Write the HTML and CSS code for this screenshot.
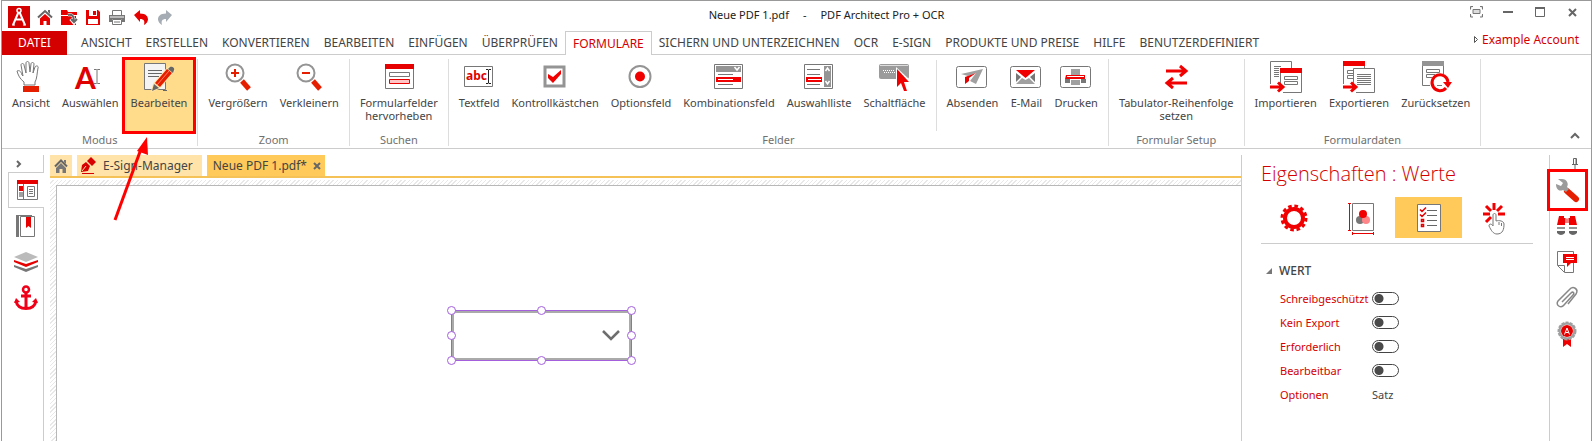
FILE: index.html
```html
<!DOCTYPE html>
<html lang="de">
  <head>
    <meta charset="utf-8">
    <title>Neue PDF 1.pdf - PDF Architect Pro + OCR</title>
    <link rel="stylesheet" href="styles.css">
  </head>
  <body>
    <div class="window">
      <header class="titlebar">
        <div class="quick">
          <svg class="logo" width="22" height="22" viewBox="0 0 22 22"><rect width="22" height="22" fill="#d40000"/><path d="M11 5L5 19M11 5l6 14M8 13.500h6" fill="none" stroke="#fff" stroke-width="2"/><circle cx="11" cy="4.500" r="2" fill="#d40000" stroke="#fff" stroke-width="1.500"/><path d="M4 19h3M15 19h3" stroke="#fff"/></svg>
          <button class="quick-btn" aria-label="Start"><svg width="18" height="18" viewBox="0 0 18 18"><path d="M2 9.500L9 3l7 6.500" fill="none" stroke="#666" stroke-width="2"/><path d="M12 2h2v4l-2-2z" fill="#666"/><path d="M4 10.500L9 6l5 4.500V17h-3.500v-4h-3v4H4z" fill="#e60000"/></svg></button>
          <button class="quick-btn" aria-label="Öffnen"><svg width="18" height="18" viewBox="0 0 18 18"><path d="M1 2h6l1 2h9v3H1zM1 8h9v9H1z" fill="#e60000"/><path d="M9 8h7v9H8" fill="#e60000"/><path d="M8 7c4-1 6 1 6 6M10.500 11l3.500 4 3-4" fill="none" stroke="#fff" stroke-width="3"/><path d="M8 7c4-1 6 1 6 6M11 11l3 3 3-3" fill="none" stroke="#666" stroke-width="2"/></svg></button>
          <button class="quick-btn" aria-label="Speichern"><svg width="18" height="18" viewBox="0 0 18 18"><path d="M2 2h12l2 2v13H2z" fill="#e60000"/><path d="M5 2h8v6H5zM4 11h10v5H4z" fill="#fff"/><path d="M9 3h3v4H9z" fill="#e60000"/></svg></button>
          <button class="quick-btn" aria-label="Drucken"><svg width="18" height="18" viewBox="0 0 18 18"><path d="M4.500 7V2.500h9V7" fill="#fff" stroke="#777"/><path d="M1 7h16v7h-3v-3H4v3H1z" fill="#777"/><path d="M2 9h14" stroke="#fff"/><path d="M4.500 11.500h9v5h-9zM6 14h6" fill="#fff" stroke="#777"/></svg></button>
          <button class="quick-btn" aria-label="Rückgängig"><svg width="18" height="18" viewBox="0 0 18 18"><path d="M2 7l6-5v3.500c6 0 8 3 8 6 0 2-2 4.500-4 5.500 1-4 0-6-4-6v3z" fill="#e60000"/></svg></button>
          <button class="quick-btn" aria-label="Wiederholen"><svg width="18" height="18" viewBox="0 0 18 18"><path d="M16 7l-6-5v3.500c-6 0-8 3-8 6 0 2 2 4.500 4 5.500-1-4 0-6 4-6v3z" fill="#a5acb3"/></svg></button>
        </div>
        <div class="title"><span>Neue PDF 1.pdf</span><span>-</span><span>PDF Architect Pro + OCR</span></div>
        <div class="controls">
          <button class="control" aria-label="Vollbild"><svg width="13" height="12" viewBox="0 0 13 12"><path d="M3 .5H.5v3M10 .5h2.500v3M.5 8v3H3M12.500 8v3H10M3 3.500h7v4H3z" fill="#ddd" stroke="#777"/></svg></button>
          <button class="control" aria-label="Minimieren"><svg width="13" height="12" viewBox="0 0 13 12"><path d="M1 6h10" stroke="#666" stroke-width="2"/></svg></button>
          <button class="control" aria-label="Maximieren"><svg width="13" height="12" viewBox="0 0 13 12"><path d="M1.500 1.500h9v9h-9z" fill="none" stroke="#666"/><path d="M1 2h10" stroke="#666" stroke-width="2"/></svg></button>
          <button class="control" aria-label="Schließen"><svg width="13" height="12" viewBox="0 0 13 12"><path d="M3 3l7 7M10 3l-7 7" stroke="#666" stroke-width="2"/></svg></button>
        </div>
      </header>

      <nav class="menu">
        <button class="menu-tab file">DATEI</button>
        <button class="menu-tab">ANSICHT</button>
        <button class="menu-tab">ERSTELLEN</button>
        <button class="menu-tab">KONVERTIEREN</button>
        <button class="menu-tab">BEARBEITEN</button>
        <button class="menu-tab">EINFÜGEN</button>
        <button class="menu-tab">ÜBERPRÜFEN</button>
        <button class="menu-tab active">FORMULARE</button>
        <button class="menu-tab">SICHERN UND UNTERZEICHNEN</button>
        <button class="menu-tab">OCR</button>
        <button class="menu-tab">E-SIGN</button>
        <button class="menu-tab">PRODUKTE UND PREISE</button>
        <button class="menu-tab">HILFE</button>
        <button class="menu-tab">BENUTZERDEFINIERT</button>
        <a class="account" href="#"><svg width="4" height="7" viewBox="0 0 4 7"><path d="M.5.5l3 3-3 3z" fill="none" stroke="#555"/></svg>Example Account</a>
      </nav>

      <section class="ribbon">
        <div class="group">
          <div class="tools">
            <button class="tool"><svg class="icon" viewBox="0 0 32 32"><path d="M9 24v-3C5 18 3 14 2 10c2-1 4 0 5 4l1 1L6 4c0-2 3-2 3 0l2 8V2c0-2 3-2 3 0l1 9 1-8c0-2 3-2 3 0l-1 9 2-6c1-2 4-1 3 1-1 5-1 11-3 14v3z" fill="#fff" stroke="#777"/><path d="M8 25h16v6H8z" fill="#e61e00"/></svg>Ansicht</button>
            <button class="tool"><svg class="icon" viewBox="0 0 32 32"><text class="glyph-a" x="1" y="28">A</text><path d="M20 8.500h2.500l.5.5.5-.5H26M23 9v13M20 22.500h2.500l.5-.5.5.5H26" fill="none" stroke="#777"/></svg>Auswählen</button>
            <button class="tool selected"><svg class="icon" viewBox="0 0 32 32"><path d="M1.500 2.500h21v26h-21z" fill="#f4f4f4" stroke="#777"/><path d="M5 9.500h14M5 12.500h14M5 15.500h11M20 29.500h4" stroke="#666"/><path d="M9 30l2-7L26 6l5 4-15 17z" fill="#ffe4a6" stroke="#ffe4a6" stroke-width="2"/><path d="M9 30l2-7 5 4z" fill="#666"/><path d="M12 22L24 8l5 4-12 14z" fill="#e61e00"/><path d="M14 24L26 10" stroke="#ff7b62"/><path d="M25 8l2-2c2-1 5 1 4 3l-1 3z" fill="#666"/></svg>Bearbeiten</button>
          </div>
          <div class="group-name">Modus</div>
        </div>
        <div class="group">
          <div class="tools">
            <button class="tool"><svg class="icon" viewBox="0 0 32 32"><circle cx="13" cy="12" r="8.500" fill="#fff" stroke="#949494" stroke-width="2"/><path d="M13 8v8M9 12h8" stroke="#e61e00" stroke-width="2"/><path d="M20 20l7 8" stroke="#e61e00" stroke-width="5"/></svg>Vergrößern</button>
            <button class="tool"><svg class="icon" viewBox="0 0 32 32"><circle cx="13" cy="12" r="8.500" fill="#fff" stroke="#949494" stroke-width="2"/><path d="M9 12h8" stroke="#e61e00" stroke-width="2"/><path d="M20 20l7 8" stroke="#e61e00" stroke-width="5"/></svg>Verkleinern</button>
          </div>
          <div class="group-name">Zoom</div>
        </div>
        <div class="group">
          <div class="tools">
            <button class="tool"><svg class="icon" viewBox="0 0 32 32"><path d="M2.500 3.500h28v24h-28z" fill="#fff" stroke="#777"/><path d="M2 3h29v5H2z" fill="#e60000"/><path d="M6.500 11.500h20v4h-20z" fill="#fff" stroke="#777"/><path d="M6.500 18.500h20v4h-20z" fill="#ffc4c4" stroke="#e60000"/></svg>Formularfelder<br>hervorheben</button>
          </div>
          <div class="group-name">Suchen</div>
        </div>
        <div class="group">
          <div class="tools">
            <button class="tool"><svg class="icon" viewBox="0 0 32 32"><path d="M1.500 5.500h28v20h-28z" fill="#fff" stroke="#777"/><text class="glyph-abc" x="3" y="19">abc</text><path d="M23 8.500h2l.5.5.5-.5h2M25.500 9v13M23 22.500h2l.5-.5.5.5h2" fill="none" stroke="#222"/></svg>Textfeld</button>
            <button class="tool"><svg class="icon" viewBox="0 0 32 32"><path d="M6 6h19v19H6z" fill="#fff" stroke="#949494" stroke-width="3"/><path d="M9 13l5 3 8-7v4l-8 9-5-5z" fill="#f00000"/></svg>Kontrollkästchen</button>
            <button class="tool"><svg class="icon" viewBox="0 0 32 32"><circle cx="15" cy="15.500" r="10.500" fill="#fff" stroke="#949494" stroke-width="2"/><circle cx="15" cy="15.500" r="5" fill="#f00000"/></svg>Optionsfeld</button>
            <button class="tool"><svg class="icon" viewBox="0 0 32 32"><path d="M1.500 3.500h28v24h-28z" fill="#fff" stroke="#777"/><path d="M3 5h25v6H3z" fill="#949494"/><path d="M21.500 6l2.500 3 2.500-3" fill="none" stroke="#fff" stroke-width="1.500"/><path d="M3 16h25v5H3z" fill="#f00000"/><path d="M5 13.500h15M5 23.500h15" stroke="#777"/><path d="M5 18.500h15" stroke="#fff"/></svg>Kombinationsfeld</button>
            <button class="tool"><svg class="icon" viewBox="0 0 32 32"><path d="M1.500 3.500h28v24h-28z" fill="#fff" stroke="#777"/><path d="M21 5h7v21h-7z" fill="#949494"/><path d="M22.500 10l2-3 2 3M22.500 20l2 3 2-3" fill="none" stroke="#fff" stroke-width="1.500"/><path d="M3 16h16v5H3z" fill="#f00000"/><path d="M4 8.500h13M4 13.500h13M4 23.500h13" stroke="#777"/><path d="M5 18.500h13" stroke="#fff"/></svg>Auswahlliste</button>
            <button class="tool"><svg class="icon" viewBox="0 0 32 32"><rect x="1" y="3" width="30" height="15" rx="2" fill="#9b9b9b"/><path d="M2 4.500h28" stroke="#ddd"/><path d="M5 9.500h11M6 11.500h11" stroke="#fff" stroke-dasharray="1 1"/><path d="M18 6v23l14-10z" fill="#fff"/><path d="M19 8v18l4-4 3 8h3l-3-9h5z" fill="#f00000"/></svg>Schaltfläche</button>
            <div class="divider"></div>
            <button class="tool"><svg class="icon" viewBox="0 0 32 32"><rect x=".5" y="5.500" width="30" height="21" rx="2" fill="#fff" stroke="#777"/><path d="M5 13l22-5-7 15-6-3 6-8-8 3z" fill="#a0a0a0"/><path d="M9 23v-7l11-4-7 5v3z" fill="#e60000"/></svg>Absenden</button>
            <button class="tool"><svg class="icon" viewBox="0 0 32 32"><rect x=".5" y="5.500" width="30" height="21" rx="2" fill="#fff" stroke="#777"/><path d="M6 9h19l-9.500 8z" fill="#f00000"/><path d="M6 12v9l5-5zM25 12v9l-5-5z" fill="#777"/><path d="M6 23l6-6 3.500 2 3.500-2 6 6z" fill="#a0a0a0"/></svg>E-Mail</button>
            <button class="tool"><svg class="icon" viewBox="0 0 32 32"><rect x=".5" y="5.500" width="30" height="21" rx="2" fill="#fff" stroke="#777"/><path d="M11 8h9v6h-9z" fill="#a0a0a0"/><path d="M6 14h19v4H5z" fill="#f00000"/><path d="M7 15.500h17" stroke="#fff"/><path d="M5 18h5v4H5zM21 18h5v4h-5z" fill="#777"/><path d="M11 19h9v5h-9z" fill="#a0a0a0"/></svg>Drucken</button>
          </div>
          <div class="group-name">Felder</div>
        </div>
        <div class="group">
          <div class="tools">
            <button class="tool"><svg class="icon" viewBox="0 0 32 32"><path d="M6 10h19M27 22H8M20 5l6 5-6 5M13 17l-6 5 6 5" fill="none" stroke="#f00000" stroke-width="3"/></svg>Tabulator-Reihenfolge<br>setzen</button>
          </div>
          <div class="group-name">Formular Setup</div>
        </div>
        <div class="group">
          <div class="tools">
            <button class="tool"><svg class="icon" viewBox="0 0 32 32"><path d="M.5 23V.5h21V7M4 5.500h7M4 7.500h5M4 9.500h5M4 11.500h5M4 13.500h5M4 15.500h5" fill="none" stroke="#777"/><path d="M10.500 23V7.500h21v24H13" fill="#fff" stroke="#777"/><path d="M10 7h22v5H10z" fill="#f00000"/><path d="M14.500 15.500h13v3h-13zM14.500 20.500h13v3h-13z" fill="#fff" stroke="#777"/><path d="M0 26h13M8 21.500l5 4.500-5 4.500" fill="none" stroke="#f00000" stroke-width="3"/></svg>Importieren</button>
            <button class="tool"><svg class="icon" viewBox="0 0 32 32"><path d="M.5 23V.5h21V7" fill="none" stroke="#777"/><path d="M0 0h22v5H0z" fill="#f00000"/><path d="M10 9.500H4.500v3H10M10 14.500H4.500v3H10" fill="none" stroke="#777"/><path d="M10.500 22V7.500h21v24H13" fill="#fff" stroke="#777"/><path d="M14 13.500h14M14 15.500h14M14 17.500h14M14 19.500h14M14 21.500h14M14 23.500h14" stroke="#777"/><path d="M0 26h13M8 21.500l5 4.500-5 4.500" fill="none" stroke="#f00000" stroke-width="3"/></svg>Exportieren</button>
            <button class="tool"><svg class="icon" viewBox="0 0 32 32"><path d="M10 24.500H2.500V.5h21V13" fill="none" stroke="#777"/><path d="M2 0h22v5H2z" fill="#949494"/><path d="M6.500 8.500h13v3h-13zM12 16.500H6.500v-3H15M17 24.500h5" fill="none" stroke="#777"/><path d="M26 27a8 8 0 1 1 2-6" fill="none" stroke="#f00000" stroke-width="3"/><path d="M23 21h9l-4 6z" fill="#f00000"/></svg>Zurücksetzen</button>
          </div>
          <div class="group-name">Formulardaten</div>
        </div>
        <button class="collapse" aria-label="Menüband reduzieren"><svg width="10" height="7" viewBox="0 0 10 7"><path d="M1 6l4-4 4 4" fill="none" stroke="#666" stroke-width="2"/></svg></button>
      </section>

      <main class="workspace">
        <aside class="side-left">
          <button class="side-toggle" aria-label="Seitenleiste öffnen"><svg width="6" height="8" viewBox="0 0 6 8"><path d="M1 1l3 3-3 3" fill="none" stroke="#666" stroke-width="2"/></svg></button>
          <button class="side-tab active" aria-label="Seiten"><svg width="24" height="24" viewBox="0 0 24 24"><path d="M2.500 3.500h20v18h-20zM8.500 4v18" fill="#fff" stroke="#777"/><path d="M2 2h21v4H2z" fill="#e60000"/><path d="M4 8h4v5H4z" fill="#e60000"/><path d="M4 14h4v5H4z" fill="#a0a0a0"/><path d="M12.500 8.500h7v10h-7zM14 11.500h4M14 13.500h4M14 15.500h4" fill="none" stroke="#777"/></svg></button>
          <button class="side-tab" aria-label="Lesezeichen"><svg width="24" height="24" viewBox="0 0 24 24"><path d="M2 1h3v22H2z" fill="#777"/><path d="M6.500 2.500h14v20h-14zM4 1.500h14" fill="#fff" stroke="#777"/><path d="M12 3h5v11l-2.500-2-2.500 2z" fill="#e60000"/></svg></button>
          <button class="side-tab" aria-label="Ebenen"><svg width="24" height="24" viewBox="0 0 24 24"><path d="M0 15l12 4 12-4v2l-12 5-12-5z" fill="#777"/><path d="M0 10l12 4 12-4v2l-12 5-12-5z" fill="#e60000"/><path d="M12 2l12 5-12 5L0 7z" fill="#bbb"/></svg></button>
          <button class="side-tab" aria-label="Anker"><svg width="24" height="26" viewBox="0 0 24 26"><circle cx="12" cy="4.500" r="3" fill="none" stroke="#f00018" stroke-width="2.500"/><path d="M12 8v16M7 11h10M2 16c1 5 5 7.500 10 7.500S21 21 22 16" fill="none" stroke="#f00018" stroke-width="3"/><path d="M0 18l2-5 4 4zM24 18l-2-5-4 4z" fill="#f00018"/></svg></button>
        </aside>

        <section class="editor">
          <div class="doc-tabs">
            <button class="doc-tab home" aria-label="Start"><svg width="14" height="14" viewBox="0 0 14 14"><path d="M1 7.500l6-6 6 6" fill="none" stroke="#666" stroke-width="2"/><path d="M10 1h2v4l-2-2zM2 9l5-5 5 5v5H8.500v-4h-3v4H2z" fill="#777"/></svg></button>
            <button class="doc-tab"><svg width="17" height="17" viewBox="0 0 17 17"><path d="M11 0l5 5-4 4-5-5z" fill="#d80000"/><path d="M6 5l4 4-2 5-7 1 1-7z" fill="#d80000"/><path d="M2 14l4-5" stroke="#ffe3a8"/><path d="M2 16.500h12" stroke="#d80000"/></svg>E-Sign-Manager</button>
            <button class="doc-tab current">Neue PDF 1.pdf*<svg width="8" height="8" viewBox="0 0 8 8"><path d="M1 1l6 6M7 1L1 7" stroke="#666" stroke-width="2"/></svg></button>
          </div>
          <div class="canvas">
            <div class="sheet">
              <div class="field">
                <select class="field-select" aria-label="Kombinationsfeld"></select>
                <svg class="field-arrow" width="18" height="11" viewBox="0 0 18 11"><path d="M1 1l8 8 8-8" fill="none" stroke="#6e6e6e" stroke-width="2.500"/></svg>
                <i class="handle top left"></i><i class="handle top center"></i><i class="handle top right"></i>
                <i class="handle middle left"></i><i class="handle middle right"></i>
                <i class="handle bottom left"></i><i class="handle bottom center"></i><i class="handle bottom right"></i>
              </div>
            </div>
          </div>
        </section>

        <aside class="panel">
          <h2 class="panel-title">Eigenschaften : Werte</h2>
          <div class="panel-tabs">
            <button class="panel-tab" aria-label="Allgemein"><svg width="30" height="32" viewBox="0 0 30 32"><circle cx="14" cy="16" r="12" fill="none" stroke="#f00000" stroke-width="3" stroke-dasharray="3.600 2.683"/><circle cx="14" cy="16" r="9" fill="none" stroke="#f00000" stroke-width="4"/></svg></button>
            <button class="panel-tab" aria-label="Darstellung"><svg width="30" height="32" viewBox="0 0 30 32"><path d="M5.500 1.500h21v27h-21z" fill="#fff" stroke="#777"/><path d="M1 1.500h3M1 28.500h3M2.500 2v26M5.500 30v3M26.500 30v3M6 31.500h20" stroke="#e60000"/><circle cx="13" cy="18" r="4" fill="#777"/><circle cx="19" cy="18" r="4" fill="#ff8589"/><circle cx="16" cy="12" r="4" fill="#f00000"/></svg></button>
            <button class="panel-tab active" aria-label="Werte"><svg width="30" height="32" viewBox="0 0 30 32"><path d="M3.500 2.500h23v27h-23z" fill="#fff" stroke="#777"/><path d="M13 8.500h10M13 13.500h10M13 18.500h10M13 23.500h10" stroke="#666"/><path d="M6 7.500l2 2 4-4M6 12.500l2 2 4-4M7.500 17.500h2v2h-2zM7.500 22.500h2v2h-2z" fill="none" stroke="#e60000" stroke-width="1.500"/></svg></button>
            <button class="panel-tab" aria-label="Aktionen"><svg width="30" height="32" viewBox="0 0 30 32"><path d="M13 1v7M2 12h7M17 12h7M5 4l5 5M21 4l-5 5M5 20l5-5" stroke="#f00000" stroke-width="3"/><path d="M12 24V13c0-2 3-2 3 0v6c3-1 8 0 8 3 0 5-1 10-7 10-4 0-6-4-8-8 0-3 3-2 4 0z" fill="#fff" stroke="#777"/><path d="M18 20v3M20.500 21v3" stroke="#777"/></svg></button>
          </div>
          <h3 class="section-title"><svg width="6" height="6" viewBox="0 0 6 6"><path d="M6 0v6H0z" fill="#777"/></svg>WERT</h3>
          <div class="props">
            <label for="readonly">Schreibgeschützt</label><input id="readonly" class="switch" type="checkbox">
            <label for="noexport">Kein Export</label><input id="noexport" class="switch" type="checkbox">
            <label for="required">Erforderlich</label><input id="required" class="switch" type="checkbox">
            <label for="editable">Bearbeitbar</label><input id="editable" class="switch" type="checkbox">
            <span class="prop-name">Optionen</span><button class="prop-value">Satz</button>
          </div>
        </aside>

        <aside class="side-right">
          <button class="pin" aria-label="Anheften"><svg width="8" height="11" viewBox="0 0 8 11"><path d="M2.500 6V.5h3V6M5 1v5M1 6.500h6M4 7v4" fill="none" stroke="#666"/></svg></button>
          <button class="side-tool marked" aria-label="Eigenschaften"><svg width="24" height="24" viewBox="0 0 24 24"><path d="M12 13l9 8" stroke="#e61e00" stroke-width="6" stroke-linecap="round"/><path d="M3 1l4 0c5 0 7 5 5 8l2 2-3 3-3-2C3 14 1 10 1 6l5 2 2-3z" fill="#9b9b9b"/></svg></button>
          <button class="side-tool" aria-label="Suchen"><svg width="24" height="24" viewBox="0 0 24 24"><path d="M4 2h5v2h6V2h5l2 9h-8V9h-4v2H2z" fill="#f00000"/><path d="M11 4h2v6h-2z" fill="none" stroke="#fff"/><path d="M2 13h8v2H2zM14 13h8v2h-8z" fill="#949494"/><path d="M2 17h8v2q-4 4-8 0zM14 17h8v2q-4 4-8 0z" fill="#666"/></svg></button>
          <button class="side-tool" aria-label="Kommentare"><svg width="24" height="24" viewBox="0 0 24 24"><path d="M2.500 1.500h16v21h-9l-7-7zM3 15.500h6.500V22" fill="#fff" stroke="#777"/><path d="M8 4h14v9h-6l-4 4v-4H8z" fill="#f00000"/><path d="M11 7.500h8M11 9.500h8" stroke="#fff"/></svg></button>
          <button class="side-tool" aria-label="Anhänge"><svg width="24" height="24" viewBox="0 0 24 24"><path d="M7 16l9-9c2-2 4 0 2 2l-9 10c-3 4-9 0-6-4L14 4c4-5 10-1 7 4l-8 10" fill="none" stroke="#888" stroke-width="1.500"/></svg></button>
          <button class="side-tool" aria-label="Signaturen"><svg width="24" height="28" viewBox="0 0 24 28"><path d="M8 19h8v8l-4-3-4 3z" fill="#f00000"/><circle cx="12" cy="11" r="8" fill="#fff" stroke="#a0a0a0" stroke-width="3" stroke-dasharray="3 1"/><circle cx="12" cy="11" r="7.500" fill="none" stroke="#a0a0a0" stroke-width="2"/><circle cx="12" cy="11" r="6" fill="#e60000"/><path d="M9.500 14.500L12 8l2.500 6.500M10.500 12.500h3" fill="none" stroke="#fff"/></svg></button>
        </aside>
      </main>

      <svg class="pointer" width="40" height="90" viewBox="0 0 40 90"><path d="M4 85L30 14" stroke="#f00" stroke-width="3"/><path d="M36 2l1 18-11-4z" fill="#f00"/></svg>
    </div>
  </body>
</html>
```

FILE: styles.css
```css
* {
  box-sizing: border-box;
}
body {
  margin: 0;
  font-family: "Noto Sans", "Open Sans", sans-serif;
  font-size: 12px;
  color: #444;
  background: #fff;
}
button {
  margin: 0;
  padding: 0;
  border: none;
  background: none;
  font: inherit;
  color: inherit;
}
svg {
  display: block;
  flex: none;
  overflow: visible;
}
.window {
  position: relative;
  display: flex;
  flex-direction: column;
  min-height: 100vh;
  margin-left: 1px;
  border: 1px solid #999;
  border-bottom: none;
}

/* title bar */
.titlebar {
  display: grid;
  grid-template-columns: 1fr auto 1fr;
  height: 30px;
}
.quick {
  display: flex;
  align-items: center;
  gap: 6px;
  padding: 2px 0 0 6px;
}
.title {
  display: flex;
  gap: 14px;
  padding-top: 5px;
  padding-left: 60px;
  font-size: 11px;
  line-height: 18px;
  color: #222;
}
.controls {
  display: flex;
  justify-content: flex-end;
  gap: 19px;
  padding: 5px 12px 0 0;
}
.control {
  height: 12px;
}

/* menu */
.menu {
  display: flex;
  height: 24px;
  border-bottom: 1px solid #ccc;
}
.menu-tab {
  height: 24px;
  padding: 0 7px;
  line-height: 22px;
  white-space: nowrap;
}
.menu-tab.file {
  width: 65px;
  margin-right: 7px;
  background: #d40000;
  color: #fff;
}
.menu-tab.active {
  border: 1px solid #ccc;
  border-bottom: none;
  background: #fff;
  color: #d40000;
}
.account {
  display: flex;
  align-items: center;
  gap: 4px;
  height: 16px;
  margin-left: auto;
  padding-right: 12px;
  color: #d40000;
  text-decoration: none;
  white-space: nowrap;
}

/* ribbon */
.ribbon {
  display: flex;
  height: 94px;
  padding: 4px 0 2px;
  border-bottom: 1px solid #ccc;
  font-size: 11px;
}
.group {
  display: flex;
  flex-direction: column;
  justify-content: space-between;
  padding: 1px 4px 0;
  border-right: 1px solid #ddd;
}
.tools {
  display: flex;
  height: 71px;
}
.tool {
  display: flex;
  flex-direction: column;
  align-items: center;
  padding: 1px 6px 0;
  line-height: 13px;
  text-align: center;
  white-space: nowrap;
}
.tool.selected {
  background: #ffdb8c;
  outline: 3px solid #f00;
}
.icon {
  width: 32px;
  height: 32px;
  margin-bottom: 3px;
}
.glyph-a {
  font: bold 30px Lato, sans-serif;
  fill: #e00000;
}
.glyph-abc {
  font: bold 12px "Noto Sans", sans-serif;
  fill: #e00000;
}
.divider {
  width: 1px;
  margin: 0 4px;
  background: #ddd;
}
.group-name {
  line-height: 12px;
  text-align: center;
  color: #707070;
}
.collapse {
  align-self: flex-end;
  margin: 0 11px 7px auto;
}

/* workspace */
.workspace {
  display: flex;
  flex: 1;
  padding-top: 6px;
}
.side-left {
  display: flex;
  flex-direction: column;
  width: 42px;
  padding-left: 6px;
}
.side-left::after {
  content: "";
  flex: 1;
  border-right: 1px solid #ccc;
}
.side-toggle {
  height: 17px;
  padding-left: 8px;
  border-right: 1px solid #ccc;
}
.side-tab {
  display: flex;
  align-items: center;
  justify-content: center;
  height: 36px;
  border-right: 1px solid #ccc;
}
.side-tab.active {
  border: 1px solid #ccc;
  border-right: none;
}
.editor {
  display: flex;
  flex: 1;
  flex-direction: column;
  margin-left: 6px;
}
.doc-tabs {
  display: flex;
  gap: 5px;
  height: 23px;
  border-bottom: 2px solid #f4c257;
}
.doc-tab {
  display: flex;
  align-items: center;
  gap: 6px;
  padding: 0 9px 0 3px;
  background: #ffe3a8;
  white-space: nowrap;
}
.doc-tab.home {
  padding: 0 4px;
}
.doc-tab.current {
  padding: 0 4px 0 6px;
  background: #ffca5a;
}
.canvas {
  display: flex;
  flex: 1;
  margin-top: 2px;
  padding: 5px 0 0 6px;
  background: repeating-linear-gradient(135deg, #fff 0 2px, #e8e8e8 2px 3px);
}
.sheet {
  position: relative;
  flex: 1;
  border: solid #b8b8b8;
  border-width: 1px 0 0 1px;
  background: #fff;
}

/* selected form field */
.field {
  position: absolute;
  left: 394px;
  top: 124px;
  width: 181px;
  height: 51px;
  border: 1px solid #a35fdc;
}
.field-select {
  display: block;
  width: 100%;
  height: 100%;
  border: 2px solid #aaa;
  border-radius: 0;
  background: #fff;
  appearance: none;
}
.field-arrow {
  position: absolute;
  right: 11px;
  top: 19px;
}
.handle {
  position: absolute;
  width: 9px;
  height: 9px;
  border: 1px solid #a35fdc;
  border-radius: 50%;
  background: #fff;
}
.handle.top {
  top: -5px;
}
.handle.middle {
  top: 20px;
}
.handle.bottom {
  bottom: -5px;
}
.handle.left {
  left: -5px;
}
.handle.center {
  left: 85px;
}
.handle.right {
  right: -5px;
}

/* properties panel */
.panel {
  width: 309px;
  padding: 0 16px 0 19px;
  border: solid #ccc;
  border-width: 0 1px;
}
.panel-title {
  margin: 0;
  font-family: "Open Sans", sans-serif;
  font-size: 20px;
  font-weight: 300;
  line-height: 38px;
  color: #d40000;
}
.panel-tabs {
  display: flex;
  height: 51px;
  padding-top: 4px;
  border-bottom: 1px solid #ccc;
}
.panel-tab {
  display: flex;
  align-items: center;
  justify-content: center;
  width: 67px;
  height: 41px;
}
.panel-tab.active {
  background: #ffca5a;
}
.section-title {
  display: flex;
  align-items: center;
  gap: 7px;
  margin: 17px 0 5px 5px;
  font-size: 12px;
  font-weight: 500;
  line-height: 20px;
}
.props {
  display: grid;
  grid-template-columns: 92px auto;
  grid-auto-rows: 24px;
  align-items: center;
  justify-content: start;
  padding-left: 19px;
  color: #d40000;
  font-size: 11px;
  white-space: nowrap;
}
.prop-value {
  color: #444;
  text-align: left;
}
.switch {
  width: 27px;
  height: 13px;
  margin: 0;
  border: 1px solid #444;
  border-radius: 7px;
  background: radial-gradient(circle at 6px 50%, #4a4a4a 4px, transparent 5px);
  appearance: none;
}
.switch:checked {
  background: radial-gradient(circle at 19px 50%, #4a4a4a 4px, transparent 5px);
}

/* right tool strip */
.side-right {
  display: flex;
  flex-direction: column;
  align-items: center;
  width: 41px;
  padding-right: 7px;
}
.pin {
  align-self: flex-end;
  height: 17px;
  margin-right: 5px;
}
.side-tool {
  display: flex;
  flex: none;
  align-items: center;
  justify-content: center;
  width: 35px;
  height: 36px;
}
.side-tool.marked {
  outline: 3px solid #f00;
}

/* arrow over the ribbon and the sheet */
.pointer {
  position: absolute;
  left: 109px;
  top: 134px;
  pointer-events: none;
}
```
